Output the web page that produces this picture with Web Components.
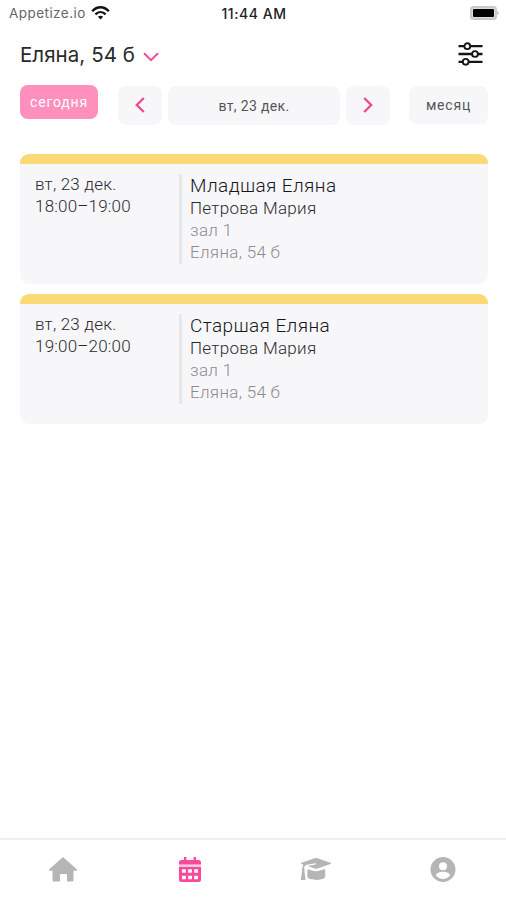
<!DOCTYPE html>
<html lang="ru">
<head>
<meta charset="utf-8">
<title>Расписание</title>
<style>
  html, body {
    margin: 0;
    height: 100%;
    background: #fff;
  }
  body {
    font-family: Roboto, "Liberation Sans", sans-serif;
    color: #2a2a2e;
    overflow: hidden;
    --pink: #f94a9a;
    --panel: #f7f7fa;
    --muted: #b5b5b7;
  }
</style>
</head>
<body>
<schedule-screen></schedule-screen>

<script>
// status-bar: carrier, clock, battery
class StatusBar extends HTMLElement {
  constructor() {
    super();
    this.attachShadow({ mode: "open" }).innerHTML = `
      <style>
        :host {
          display: grid;
          grid-template-columns: 1fr auto 1fr;
          align-items: center;
          height: 26px;
          padding: 0 7px 0 9px;
          box-sizing: border-box;
          font-family: Inter, "Liberation Sans", sans-serif;
          font-size: 13.5px;
        }
        .left { display: flex; align-items: center; gap: 5px; color: #66666a; }
        .carrier { letter-spacing: 0.45px; }
        .clock { font-size: 14px; font-weight: 500; color: #222; letter-spacing: 0.55px; }
        .battery { justify-self: end; }
        svg { display: block; }
      </style>
      <div class="left">
        <span class="carrier">Appetize.io</span>
        <svg width="19" height="14" viewBox="0 0 19 14" fill="none" stroke="#111" stroke-width="2.4">
          <path d="M1.2 5.2C6-.1 13-.1 17.8 5.2"/>
          <path d="M4.4 8.4c3-3 7.2-3 10.2 0"/>
          <path d="M9.5 13.4 6.9 10.7c1.4-1.4 3.8-1.4 5.2 0z" fill="#111" stroke="none"/>
        </svg>
      </div>
      <span class="clock">11:44 AM</span>
      <svg class="battery" width="29" height="14" viewBox="0 0 29 14">
        <rect x="1" y="1" width="25" height="12" rx="2.5" fill="#ddd" stroke="#c9c9c9" stroke-width="2"/>
        <path d="M27.300 5v4c1.800-.5 1.800-3.500 0-4z" fill="#bbb"/>
        <rect x="3" y="3" width="21" height="8" rx="1" fill="#000"/>
      </svg>
    `;
  }
}

// screen-header: branch picker and the filter button
class ScreenHeader extends HTMLElement {
  constructor() {
    super();
    this.attachShadow({ mode: "open" }).innerHTML = `
      <style>
        :host {
          display: flex;
          align-items: center;
          justify-content: space-between;
          height: 55px;
          padding: 0 23px 2px 20px;
          font-family: Inter, "Liberation Sans", sans-serif;
        }
        .branch { display: flex; align-items: center; gap: 8px; padding-top: 2px; font-size: 20.5px; letter-spacing: 0.05px; color: #2a2a2a; }
        svg { display: block; }
        .branch svg { margin-top: 5px; }
      </style>
      <div class="branch">
        <slot></slot>
        <svg width="16" height="10" viewBox="0 0 16 10" fill="none" stroke="#f94a9a" stroke-width="2">
          <path d="M1 1.200 8 8.200l7-7"/>
        </svg>
      </div>
      <svg width="25" height="24" viewBox="0 0 25 24" fill="#fff" stroke="#151515" stroke-width="2.3">
        <path d="M.5 4.200h24M.5 12h24M.5 19.800h24"/>
        <circle cx="9.300" cy="4.200" r="2.900" stroke-width="1.900"/>
        <circle cx="17" cy="12" r="2.900" stroke-width="1.900"/>
        <circle cx="7.700" cy="19.800" r="2.900" stroke-width="1.900"/>
      </svg>
    `;
  }
}

// date-bar: today / previous / current day / next / month
class DateBar extends HTMLElement {
  constructor() {
    super();
    this.attachShadow({ mode: "open" }).innerHTML = `
      <style>
        :host {
          display: flex;
          align-items: flex-start;
          padding: 2px 18px 0 20px;
          height: 41px;
        }
        div {
          display: flex;
          align-items: center;
          justify-content: center;
          box-sizing: border-box;
          height: 39px;
          margin-top: 1px;
          border-radius: 8px;
          background: var(--panel);
          font-size: 14px;
          color: #555559;
        }
        .today {
          width: 78px;
          height: 34px;
          margin: 0 20px 0 0;
          background: #ff8fbd;
          color: #fff;
        }
        .arrow { width: 44px; padding-bottom: 1px; }
        .day { width: 172px; margin-left: 6px; margin-right: 6px; }
        .month { width: 79px; height: 38px; margin-left: 19px; }
        .today span { letter-spacing: 0.8px; }
        .day span { letter-spacing: 0.35px; }
        .month span { letter-spacing: 0.8px; }
      </style>
      <div class="today"><span>сегодня</span></div>
      <div class="arrow">
        <svg width="10" height="16" viewBox="0 0 10 16" fill="none" stroke="#f0478c" stroke-width="2.300"><path d="M8.800 1 1.800 8l7 7"/></svg>
      </div>
      <div class="day"><span>вт, 23 дек.</span></div>
      <div class="arrow">
        <svg width="10" height="16" viewBox="0 0 10 16" fill="none" stroke="#f0478c" stroke-width="2.300"><path d="m1.200 1 7 7-7 7"/></svg>
      </div>
      <div class="month"><span>месяц</span></div>
    `;
  }
}

// lesson-card: one class in the schedule
class LessonCard extends HTMLElement {
  constructor() {
    super();
    this.attachShadow({ mode: "open" });
  }

  connectedCallback() {
    const get = (name) => this.getAttribute(name) || "";
    this.shadowRoot.innerHTML = `
      <style>
        :host {
          display: flex;
          box-sizing: border-box;
          height: 130px;
          padding: 10px 15px 19px;
          border-top: 10px solid #fbd977;
          border-radius: 9px;
          background: linear-gradient(var(--panel), var(--panel)) padding-box;
          overflow: hidden;
          font-size: 17px;
          font-weight: 300;
          line-height: 22px;
        }
        .when { width: 144px; margin-top: -1px; letter-spacing: 0.2px; }
        .what {
          flex: 1;
          padding-left: 8px;
          border-left: 3px solid #e8e8eb;
          height: 90px;
          letter-spacing: 0.3px;
        }
        .title { font-size: 19px; line-height: 24px; margin-bottom: -1px; letter-spacing: 0.4px; color: #18181c; }
        .muted { color: #8c8c90; }
      </style>
      <div class="when">
        <div>${get("date")}</div>
        <div>${get("time")}</div>
      </div>
      <div class="what">
        <div class="title">${get("name")}</div>
        <div>${get("teacher")}</div>
        <div class="muted">${get("room")}</div>
        <div class="muted">${get("branch")}</div>
      </div>
    `;
  }
}

// tab-bar: bottom navigation, icons only
class TabBar extends HTMLElement {
  constructor() {
    super();
    this.attachShadow({ mode: "open" }).innerHTML = `
      <style>
        :host {
          display: grid;
          grid-template-columns: repeat(4, 1fr);
          justify-items: center;
          box-sizing: border-box;
          height: 62px;
          padding-top: 16px;
          border-top: 2px solid #efefef;
          color: var(--muted);
        }
        svg { display: block; fill: currentColor; }
        .active { color: var(--pink); }
      </style>
      <svg width="30" height="27" viewBox="0 0 30 27">
        <path d="m15 1 14 12.500c.4.500.1 1.200-.5 1.200H25.500V24q0 1.500-1.500 1.500h-5v-6.500q0-1-1-1h-5q-1 0-1 1v6.500H6Q4.500 25.500 4.500 24v-9.300h-3c-.6 0-.9-.7-.5-1.200z"/>
      </svg>
      <svg class="active" width="24" height="27" viewBox="0 0 24 27">
        <path d="M6 1h2.400v3h7.200V1H18v3h2.500Q23 4 23 6.500V8.500H1V6.500Q1 4 3.500 4H6z"/>
        <path opacity=".3" d="M1 8.500h22V11H1z"/>
        <path fill-rule="evenodd" d="M1 11h22v12.500q0 2.500-2.500 2.500h-17Q1 26 1 23.500zM4 13.300v3.500h3.800v-3.500zm6.100 0v3.500h3.800v-3.500zm6.100 0v3.500H20v-3.500zM4 19.700v3.500h3.800v-3.500zm6.100 0v3.500h3.800v-3.500zm6.100 0v3.500H20v-3.500z"/>
      </svg>
      <svg width="32" height="27" viewBox="0 0 32 27">
        <path d="M14.500 2.300q1.500-.5 3 0l13 4.500q1.300.6 0 1.200l-13 4.500q-1.500.5-3 0l-6.800-2.400 7.800-1.600q.8-.3.500-.9-.3-.5-1-.3L6 9q-1.800.8-2 3.200 1.300 1 .4 2.500l1.100 8.500q0 .8-.7.800H1.500q-.8 0-.7-.8l1.400-8.500q-1.200-1.500.2-2.600.1-2 1-3.300L1.500 8q-1.300-.6 0-1.200z"/>
        <path d="M7.500 13.200l6.500 1.800q2 .6 4 0l7-2.100.3 7.100c0 5.200-18 5.200-18 0z"/>
      </svg>
      <svg width="26" height="27" viewBox="0 0 26 27">
        <path fill-rule="evenodd" d="M13 1a12.500 12.500 0 1 0 0 25 12.500 12.500 0 1 0 0-25zm0 5.200a4 4 0 1 1 0 8 4 4 0 1 1 0-8zM6 19.500c.2-5 13.800-5 14 0-3.300 4.500-10.700 4.500-14 0z"/>
      </svg>
    `;
  }
}

class ScheduleScreen extends HTMLElement {
  constructor() {
    super();
    this.attachShadow({ mode: "open" }).innerHTML = `
      <style>
        :host {
          display: flex;
          flex-direction: column;
          height: 100vh;
        }
        main {
          flex: 1;
          display: flex;
          flex-direction: column;
          gap: 10px;
          padding: 28px 18px 0 20px;
        }
      </style>
      <status-bar></status-bar>
      <screen-header>Еляна, 54 б</screen-header>
      <date-bar></date-bar>
      <main>
        <lesson-card date="вт, 23 дек." time="18:00–19:00" name="Младшая Еляна"
          teacher="Петрова Мария" room="зал 1" branch="Еляна, 54 б"></lesson-card>
        <lesson-card date="вт, 23 дек." time="19:00–20:00" name="Старшая Еляна"
          teacher="Петрова Мария" room="зал 1" branch="Еляна, 54 б"></lesson-card>
      </main>
      <tab-bar></tab-bar>
    `;
  }
}

customElements.define("status-bar", StatusBar);
customElements.define("screen-header", ScreenHeader);
customElements.define("date-bar", DateBar);
customElements.define("lesson-card", LessonCard);
customElements.define("tab-bar", TabBar);
customElements.define("schedule-screen", ScheduleScreen);
</script>
</body>
</html>
